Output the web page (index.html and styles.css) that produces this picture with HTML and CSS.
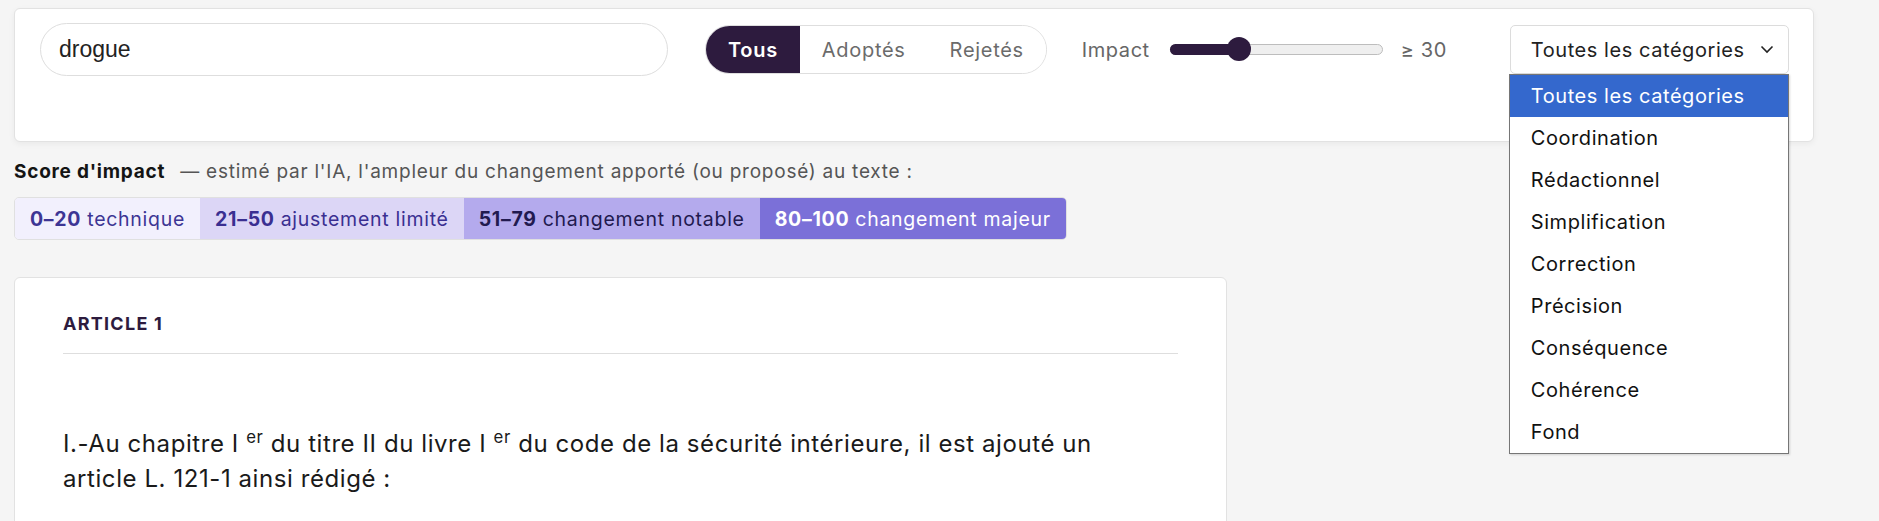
FILE: index.html
```html
<!DOCTYPE html>
<html lang="fr">
<head>
    <meta charset="UTF-8">
    <meta name="viewport" content="width=device-width, initial-scale=1.0">
    <title>Amendements</title>
    <link rel="stylesheet" href="styles.css">
</head>
<body>
    <div class="page">
        <section class="filters">
            <div class="filters-row">
                <input type="text" class="search" value="drogue">
                <div class="status-toggle">
                    <button class="status active">Tous</button>
                    <button class="status">Adoptés</button>
                    <button class="status">Rejetés</button>
                </div>
                <div class="impact">
                    <span class="impact-label">Impact</span>
                    <div class="slider">
                        <div class="slider-fill" style="width: 68px"></div>
                        <div class="slider-thumb" style="left: 56px"></div>
                    </div>
                    <span class="impact-value">≥ 30</span>
                </div>
                <div class="category">
                    <div class="category-select">
                        <span>Toutes les catégories</span>
                        <svg class="chevron" width="14" height="9" viewBox="0 0 14 9"><path d="M1.5 1.5 L7 7 L12.5 1.5" fill="none" stroke="#222" stroke-width="1.6"/></svg>
                    </div>
                    <ul class="category-options">
                        <li class="selected">Toutes les catégories</li>
                        <li>Coordination</li>
                        <li>Rédactionnel</li>
                        <li>Simplification</li>
                        <li>Correction</li>
                        <li>Précision</li>
                        <li>Conséquence</li>
                        <li>Cohérence</li>
                        <li>Fond</li>
                    </ul>
                </div>
            </div>
        </section>

        <p class="legend-intro"><strong>Score d'impact</strong><span class="legend-desc">— estimé par l'IA, l'ampleur du changement apporté (ou proposé) au texte :</span></p>
        <div class="legend">
            <span class="level level-1"><b>0–20</b> technique</span>
            <span class="level level-2"><b>21–50</b> ajustement limité</span>
            <span class="level level-3"><b>51–79</b> changement notable</span>
            <span class="level level-4"><b>80–100</b> changement majeur</span>
        </div>

        <main class="articles">
            <article class="article-card">
                <h2 class="article-title">Article 1</h2>
                <p class="article-text">I.-Au chapitre I <sup>er</sup> du titre II du livre I <sup>er</sup> du code de la sécurité intérieure, il est ajouté un<br>article L. 121-1 ainsi rédigé :</p>
            </article>
        </main>
    </div>
</body>
</html>
```

FILE: styles.css
```css
body {
    margin: 0;
    background-color: #f5f5f5;
    font-family: "Inter", "Noto Sans", sans-serif;
    letter-spacing: 0.035em;
    color: #1c1c1c;
}

.page {
    max-width: 1800px;
    padding: 8px 0 0 14px;
}

/* barre de filtres */
.filters {
    background-color: #fff;
    border: 1px solid #e2e2e2;
    border-radius: 6px;
    box-shadow: 0 2px 6px rgba(0, 0, 0, 0.05);
    padding: 14px 25px 65px;
}
.filters-row {
    display: flex;
    align-items: center;
}

.search {
    flex-shrink: 0;
    width: 628px;
    height: 53px;
    box-sizing: border-box;
    border: 1px solid #dedede;
    border-radius: 27px;
    padding: 0 18px;
    font-family: "Liberation Sans", Arial, sans-serif;
    font-size: 23px;
    letter-spacing: 0;
    color: #222;
    outline: none;
}

.status-toggle {
    display: flex;
    flex-shrink: 0;
    margin-left: 37px;
    height: 49px;
    box-sizing: border-box;
    border: 1px solid #dedede;
    border-radius: 25px;
    overflow: hidden;
}
.status {
    border: none;
    background: #fff;
    font-family: inherit;
    font-size: 20px;
    letter-spacing: 0.035em;
    color: #6b6b6b;
    padding: 0 22px;
}
.status.active {
    background-color: #2d1b3e;
    color: #fff;
    font-weight: 600;
}

.impact {
    display: flex;
    flex-shrink: 0;
    align-items: center;
    margin-left: 35px;
    font-size: 20px;
    color: #666;
    white-space: nowrap;
}
.slider {
    position: relative;
    width: 213px;
    height: 11px;
    box-sizing: border-box;
    margin: 0 18px 0 20px;
    border: 1px solid #bdbdbd;
    border-radius: 6px;
    background-color: #efefef;
}
.slider-fill {
    position: absolute;
    left: -1px;
    top: -1px;
    height: 11px;
    border-radius: 6px;
    background-color: #2d1b3e;
}
.slider-thumb {
    position: absolute;
    top: -8px;
    width: 24px;
    height: 24px;
    border-radius: 50%;
    background-color: #2d1b3e;
}

.category {
    position: relative;
    flex-shrink: 0;
    margin-left: 63px;
}
.category-select {
    width: 279px;
    height: 49px;
    box-sizing: border-box;
    border: 1px solid #dcdcdc;
    border-radius: 5px;
    padding: 0 14px 0 20px;
    display: flex;
    align-items: center;
    justify-content: space-between;
    font-size: 20px;
    color: #222;
}
.category-options {
    position: absolute;
    top: 49px;
    left: -1px;
    width: 280px;
    box-sizing: border-box;
    margin: 0;
    padding: 0;
    list-style: none;
    background: #fff;
    border: 1px solid #767676;
    box-shadow: 1px 1px 2px rgba(0, 0, 0, 0.15);
    z-index: 2;
}
.category-options li {
    height: 42px;
    line-height: 42px;
    padding-left: 21px;
    font-size: 20px;
    color: #111;
}
.category-options li.selected {
    background-color: #3468cd;
    color: #fff;
}

/* légende du score */
.legend-intro {
    margin: 18px 0 13px;
    font-size: 19px;
    line-height: 24px;
    letter-spacing: 0.04em;
}
.legend-intro strong {
    color: #141414;
    font-weight: 700;
}
.legend-desc {
    margin-left: 15px;
    color: #555;
}

.legend {
    display: inline-flex;
    height: 41px;
    border: 1px solid #e0e0e0;
    border-radius: 5px;
    overflow: hidden;
    font-size: 19.5px;
    letter-spacing: 0.037em;
}
.level {
    display: flex;
    align-items: center;
    padding: 0 15px;
}
.level b {
    margin-right: 6px;
    font-weight: 700;
}
.level-1 {
    background-color: #f2f0fd;
    color: #3d3594;
}
.level-2 {
    background-color: #dcd6f6;
    color: #3a2f91;
}
.level-3 {
    background-color: #b4aaed;
    color: #221a50;
}
.level-4 {
    background-color: #7b70d8;
    color: #fff;
}

/* articles */
.articles {
    margin-top: 37px;
    width: 1213px;
}
.article-card {
    background-color: #fff;
    border: 1px solid #e2e2e2;
    border-radius: 6px;
    padding: 34px 48px 60px;
}
.article-title {
    margin: 0;
    padding-bottom: 17px;
    border-bottom: 1px solid #dedede;
    font-size: 18px;
    line-height: 24px;
    font-weight: 700;
    letter-spacing: 0.07em;
    text-transform: uppercase;
    color: #2d1b3e;
}
.article-text {
    margin: 72px 0 0;
    width: 1080px;
    font-size: 24px;
    line-height: 35px;
    letter-spacing: 0.024em;
    color: #1a1a1a;
}
.article-text sup {
    font-size: 0.7em;
    line-height: 1;
}
```
